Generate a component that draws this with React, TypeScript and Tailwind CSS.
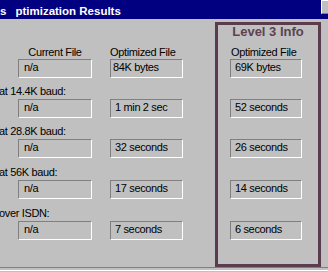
import React from "react";

type Row = { label: string | null; cur: string; opt: string; l3: string; mt: string; optPl?: string };

const rows: Row[] = [
  { label: null, cur: "n/a", opt: "84K bytes", l3: "69K bytes", mt: "", optPl: "pl-[2px]" },
  { label: "at 14.4K baud:", cur: "n/a", opt: "1 min 2 sec", l3: "52 seconds", mt: "mt-[6px]" },
  { label: "at 28.8K baud:", cur: "n/a", opt: "32 seconds", l3: "26 seconds", mt: "mt-[6px]" },
  { label: "at 56K baud:", cur: "n/a", opt: "17 seconds", l3: "14 seconds", mt: "mt-[7px]" },
  { label: "over ISDN:", cur: "n/a", opt: "7 seconds", l3: "6 seconds", mt: "mt-[7px]" },
];

function Field({ text, className }: { text: string; className: string }) {
  return (
    <div
      className={
        "h-[19px] border border-t-[#808080] border-l-[#808080] border-b-white border-r-white pt-[1px] leading-[13px] whitespace-nowrap overflow-hidden " +
        className
      }
    >
      {text}
    </div>
  );
}

export default function App() {
  return (
    <div className="w-[328px] h-[272px] overflow-hidden bg-[#c0c0c0] font-['Liberation_Sans',Arial,sans-serif] text-[11px] tracking-[-0.35px] text-black">
      {/* title bar */}
      <div className="h-[19px] bg-[#000080] flex items-start text-white text-[11.5px] font-bold tracking-normal">
        <span className="pt-[3px] leading-[16px]">s</span>
        <span className="pt-[3px] leading-[16px] ml-[9px]">ptimization Results</span>
        <div className="ml-auto w-[7px] h-[14px] bg-[#c0c0c0] border-l border-t border-white border-b border-b-[#808080]" />
      </div>

      <div className="flex h-[248px]">
        {/* left part */}
        <div className="w-[215px] pt-[27px]">
          {rows.map((r, i) => (
            <div key={i} className={r.mt}>
              {r.label === null ? (
                <div className="flex h-[13px] leading-[13px]">
                  <div className="ml-[18px] w-[74px] text-center">Current File</div>
                  <div className="ml-[18px]">Optimized File</div>
                </div>
              ) : (
                <div className="h-[14px] leading-[14px] ml-[-1px] whitespace-nowrap">{r.label}</div>
              )}
              <div className={"flex " + (r.label === null ? "" : "mt-[1px]")}>
                <Field text={r.cur} className="ml-[18px] w-[74px] pl-[5px]" />
                <Field text={r.opt} className={"ml-[18px] w-[73px] " + (r.optPl ?? "pl-[4px]")} />
              </div>
            </div>
          ))}
        </div>

        {/* Level 3 box */}
        <div className="mt-[3px] w-[106px] h-[245px] border-[3px] border-[#5b3c4d]">
          <div className="h-[13px] leading-[13px] text-center text-[13px] font-bold text-[#5e4252] tracking-normal">
            Level 3 Info
          </div>
          <div className="pl-[12px]">
            {rows.map((r, i) => (
              <div key={i} className={i === 0 ? "mt-[8px]" : r.mt}>
                {r.label === null ? (
                  <div className="h-[13px] leading-[13px] ml-[1px]">Optimized File</div>
                ) : (
                  <div className="h-[14px]" />
                )}
                <div className={r.label === null ? "" : "mt-[1px]"}>
                  <Field text={r.l3} className="w-[72px] pl-[4px]" />
                </div>
              </div>
            ))}
          </div>
        </div>
      </div>

      {/* bottom separator */}
      <div className="h-[1px] bg-[#808080]" />
      <div className="h-[2px]" />
      <div className="h-[1px] bg-white" />
    </div>
  );
}
